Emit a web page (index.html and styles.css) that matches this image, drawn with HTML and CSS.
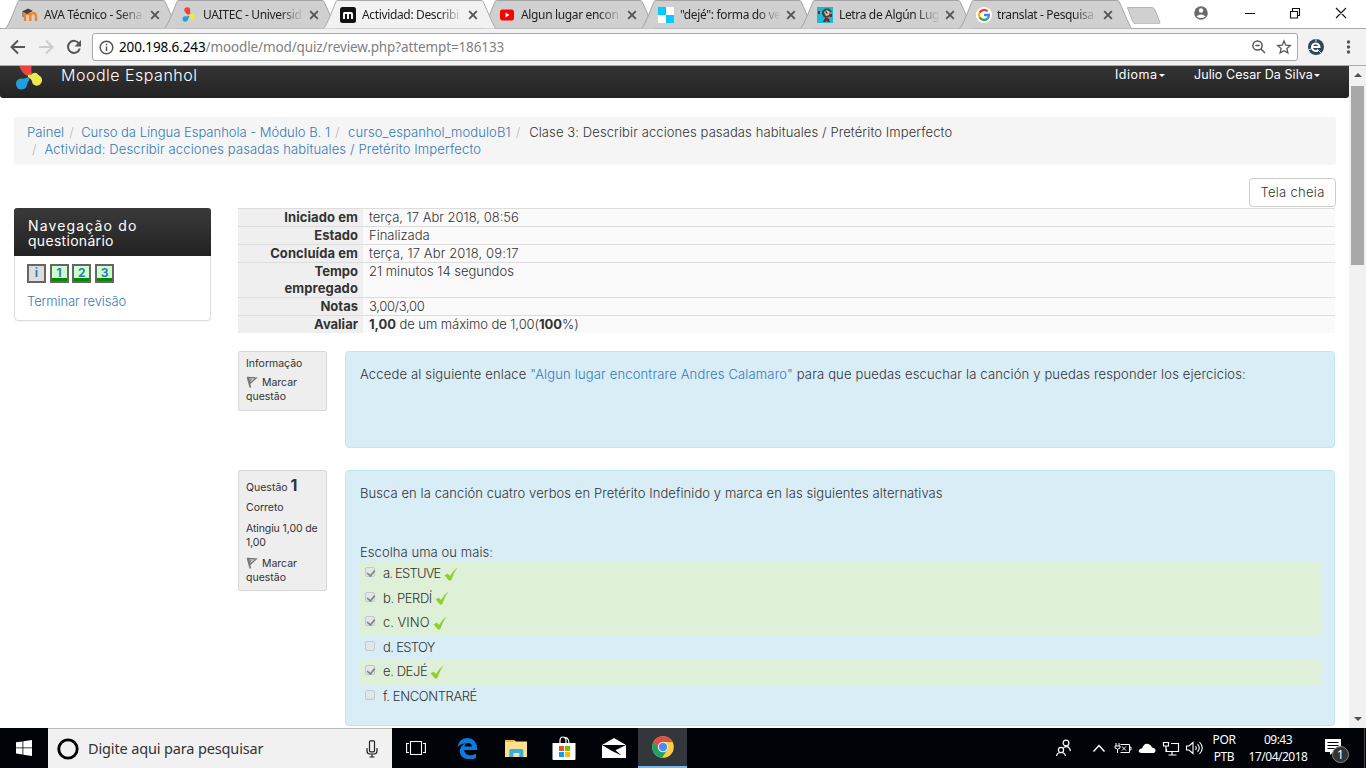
FILE: index.html
```html
<!DOCTYPE html>
<html lang="pt-br">
<head>
<meta charset="utf-8">
<title>Moodle Espanhol</title>
<link rel="stylesheet" href="styles.css">
</head>
<body>
<svg class="defs" width="0" height="0">
  <defs>
    <symbol id="tabshape" viewBox="0 0 173 29"><path d="M.5 28.500 C4 26 12 3 13.500.8Q14.200.5 15 .5H158Q159 .5 160 1.500C162 5 170 25 172.500 28.500"/></symbol>
    <symbol id="x" viewBox="0 0 10 10"><path d="M1.200 1.200l7.600 7.600M8.800 1.200l-7.600 7.600" stroke="#555" stroke-width="1.900"/></symbol>
    <symbol id="blob" viewBox="0 0 28 32">
      <path d="M4.500 6a6 6 0 1 1 12 1Q16 11 17 14L13 16Q9 15 6.500 10.500Q4.500 8.500 4.500 6z" fill="#ee4340"/>
      <path d="M13 14.500Q16 15.500 17.500 13.500Q21 11.500 23.500 15Q27.500 17 27 21Q25.500 26.500 20.500 25.500Q17 24.500 17 21Q16 18 13 17.500z" fill="#ece84d"/>
      <path d="M13.500 17Q9 19.500 6 18.500Q1 19 1 24Q1.500 29.500 6.500 29.500Q11.500 29 12 25Q12 22 14.500 20z" fill="#219fdc"/>
    </symbol>
    <symbol id="tick" viewBox="0 0 14 14"><path d="M.5 8.300L3.800 6.800 6 9Q8.500 4 13.700.2Q9.200 6 7.200 13.300L5.200 13.700z" fill="#8fce2c"/></symbol>
    <symbol id="flag" viewBox="0 0 12 12"><path d="M1.500 1.200l2.900 10.300" stroke="#777" stroke-width="1.700" fill="none"/><path d="M2 1.300L10.300 2 4.200 7.300z" fill="#ddd" stroke="#777" stroke-width="1.300"/><path d="M3 2l3 1-2 3z" fill="#888"/></symbol>
  </defs>
</svg>

<header class="tabs">
  <div class="tab"><svg class="shape"><use href="#tabshape"/></svg>
    <svg class="fav" viewBox="0 0 16 16"><path d="M3 14V7.500Q4 6 6 7Q8 6.500 8.300 8V14M8.300 8Q9.500 5.800 12 6.200Q14 6.500 14 9V14" fill="none" stroke="#f58220" stroke-width="2.400"/><path d="M0 4.500L6 1.500 11 4 5 7z" fill="#444"/><path d="M1 5v5" stroke="#555"/></svg>
    <span class="title">AVA Técnico - Sena</span><svg class="close"><use href="#x"/></svg></div>
  <div class="tab"><svg class="shape"><use href="#tabshape"/></svg>
    <svg class="fav"><use href="#blob"/></svg>
    <span class="title">UAITEC - Universid</span><svg class="close"><use href="#x"/></svg></div>
  <div class="tab active"><svg class="shape"><use href="#tabshape"/></svg>
    <svg class="fav" viewBox="0 0 16 16"><rect width="16" height="16" rx="2.500" fill="#111"/><path d="M4 12V5.500M4 6H7.500Q8 6 8 7V12M8 6H11Q12 6 12 7V12" fill="none" stroke="#fff" stroke-width="1.900"/></svg>
    <span class="title">Actividad: Describi</span><svg class="close"><use href="#x"/></svg></div>
  <div class="tab"><svg class="shape"><use href="#tabshape"/></svg>
    <svg class="fav" viewBox="0 0 16 16"><rect x="1" y="2.500" width="14" height="11" rx="2.500" fill="#f00"/><path d="M6.500 5.500v5l4-2.500z" fill="#fff"/></svg>
    <span class="title">Algun lugar encon</span><svg class="close"><use href="#x"/></svg></div>
  <div class="tab"><svg class="shape"><use href="#tabshape"/></svg>
    <svg class="fav" viewBox="0 0 16 16"><path fill="#fff" d="M0 0h16v16H0z"/><path fill="#0cf" d="M0 0h8v8h8v8H8V8H0z"/></svg>
    <span class="title">"dejé": forma do ve</span><svg class="close"><use href="#x"/></svg></div>
  <div class="tab"><svg class="shape"><use href="#tabshape"/></svg>
    <svg class="fav" viewBox="0 0 16 16"><path fill="#19bcd8" d="M0 0h16v16H0z"/><path d="M5 4l3-2.500 4 0 3 3-2 1 1 3-3 2H7L5 7z" fill="#444"/><path d="M7 5l3-2 3 2-1 3-3 1z" fill="#d9d0b0"/><path d="M8.500 4.500l2 2" stroke="#333" stroke-width="1.300"/><path d="M1 4h2v3H1zM13 7h2v3h-2zM7 12.500l2-2.500 3 2 1 3h-2l-1.500-1L8 15H6z" fill="#a01818"/></svg>
    <span class="title">Letra de Algún Lug</span><svg class="close"><use href="#x"/></svg></div>
  <div class="tab last"><svg class="shape"><use href="#tabshape"/></svg>
    <svg class="fav" viewBox="0 0 16 16"><circle cx="8" cy="8" r="8" fill="#fff"/><g fill="none" stroke-width="2.300"><path d="M11.500 4.300A5 5 0 0 0 3.600 5.700" stroke="#ea4335"/><path d="M3.600 5.700a5 5 0 0 0 0 4.600" stroke="#fbbc05"/><path d="M3.600 10.300a5 5 0 0 0 7.800 1.400" stroke="#34a853"/><path d="M11.400 11.700A5 5 0 0 0 13 8H8" stroke="#4285f4"/></g></svg>
    <span class="title">translat - Pesquisa</span><svg class="close"><use href="#x"/></svg></div>
  <svg class="newtab" width="38" height="24" viewBox="0 0 38 24"><path d="M3.500 7.500H28Q30 7.500 31 10L36 22.500Q36 24 34 24H12Q9.500 24 8.500 21z" fill="#d0d0d0" stroke="#b5b5b5"/></svg>
  <svg class="winctl" width="182" height="28" viewBox="0 0 182 28"><circle cx="17" cy="13" r="6.800" fill="#6b6b6b"/><circle cx="17" cy="10.500" r="2.200" fill="#fff"/><path d="M12.500 16.500q4.500-4 9 0q-4.500 3-9 0" fill="#fff"/><g fill="none" stroke="#111" stroke-width="1.100"><path d="M61 13.500h10M106.500 11.500h7v6.500h-7zM108.500 11V8.500h7v7h-2M152 8l10 10M162 8l-10 10"/></g></svg>
</header>

<div class="toolbar">
  <svg class="nav" width="92" height="37" viewBox="0 0 92 37"><g fill="none" stroke-width="2"><path d="M25 19H12M18 12.500L11.500 19 18 25.500" stroke="#555"/><path d="M39 19h13M46 12.500l6.500 6.500L46 25.500" stroke="#ccc"/><path d="M79 15.500a6 6 0 1 0 .8 5" stroke="#555"/></g><path d="M81 12v6.500h-6.500z" fill="#555"/></svg>
  <div class="omnibox">
    <svg width="15" height="15" viewBox="0 0 15 15" fill="none" stroke="#555" stroke-width="1.500"><circle cx="7.500" cy="7.500" r="6.300"/><path d="M7.500 6.500v4.500M7.500 3.700v1.600"/></svg>
    <span class="url"><b>200.198.6.243</b>/moodle/mod/quiz/review.php?attempt=186133</span>
    <svg class="right" width="42" height="16" viewBox="0 0 42 16" fill="none" stroke="#555" stroke-width="1.500"><circle cx="6.500" cy="6.500" r="4.600"/><path d="M10 10l4 4M4.300 6.500h4.400" /><path d="M33 2l1.800 4.200 4.500.4-3.400 3 1 4.400-3.900-2.300-3.900 2.300 1-4.400-3.400-3 4.500-.4z" stroke-width="1.300"/></svg>
  </div>
  <svg width="68" height="37" viewBox="0 0 68 37"><circle cx="18" cy="19" r="8" fill="#2f4858"/><path d="M13.500 19H21.500A3.800 3.800 0 1 0 20.500 21.800" fill="none" stroke="#fff" stroke-width="2"/><path d="M18 11v3M10 22l3-1M23 25l-2-2" stroke="#fff" stroke-width=".8"/><g fill="#555"><circle cx="50.500" cy="14" r="1.700"/><circle cx="50.500" cy="19" r="1.700"/><circle cx="50.500" cy="24" r="1.700"/></g></svg>
</div>

<div class="viewport">
  <div class="page">
    <nav class="navbar">
      <svg class="logo" width="28" height="32"><use href="#blob"/></svg>
      <span class="brand">Moodle Espanhol</span>
      <span class="menu lang">Idioma<i class="caret"></i></span>
      <span class="menu user">Julio Cesar Da Silva<i class="caret"></i></span>
    </nav>
    <div class="crumbs">
      <div><a class="c1">Painel</a><i>/</i><a class="c2">Curso da Língua Espanhola - Módulo B. 1</a><i>/</i><a class="c3">curso_espanhol_moduloB1</a><i>/</i><span class="c4">Clase 3: Describir acciones pasadas habituales / Pretérito Imperfecto</span></div>
      <div><i class="first">/</i><a class="c5">Actividad: Describir acciones pasadas habituales / Pretérito Imperfecto</a></div>
    </div>
    <div class="actions"><button class="btn">Tela cheia</button></div>
    <div class="columns">
      <aside class="block">
        <h2><span class="wide">Navegação do</span><br>questionário</h2>
        <div class="block-body">
          <div class="qn"><a class="info">i</a><a>1</a><a>2</a><a>3</a></div>
          <a class="finish">Terminar revisão</a>
        </div>
      </aside>
      <main>
        <table class="summary">
          <tr><th class="wider">Iniciado em</th><td>terça, 17 Abr 2018, 08:56</td></tr>
          <tr><th>Estado</th><td>Finalizada</td></tr>
          <tr><th class="wider">Concluída em</th><td class="date">terça, 17 Abr 2018, 09:17</td></tr>
          <tr><th>Tempo<br><span class="t2">empregado</span></th><td>21 minutos 14 segundos</td></tr>
          <tr><th>Notas</th><td class="num">3,00/3,00</td></tr>
          <tr><th>Avaliar</th><td class="grade"><b>1,00</b> de um máximo de 1,00(<b>100</b>%)</td></tr>
        </table>
        <section class="que">
          <div class="qinfo"><p>Informação</p><p><svg width="12" height="12"><use href="#flag"/></svg> Marcar<br>questão</p></div>
          <div class="qbody short"><p class="q0">Accede al siguiente enlace <a>"Algun lugar encontrare Andres Calamaro"</a> para que puedas escuchar la canción y puedas responder los ejercicios:</p></div>
        </section>
        <section class="que second">
          <div class="qinfo graded"><p class="no">Questão <b>1</b></p><p>Correto</p><p class="mark">Atingiu 1,00 de<br>1,00</p><p><svg width="12" height="12"><use href="#flag"/></svg> Marcar<br>questão</p></div>
          <div class="qbody"><p class="q1">Busca en la canción cuatro verbos en Pretérito Indefinido y marca en las siguientes alternativas</p>
            <p class="prompt">Escolha uma ou mais:</p>
            <div class="ans ok"><i class="box on"></i><span class="a1">a. ESTUVE</span><svg class="tick"><use href="#tick"/></svg></div>
            <div class="ans ok"><i class="box on"></i><span class="a2">b. PERDÍ</span><svg class="tick"><use href="#tick"/></svg></div>
            <div class="ans ok"><i class="box on"></i><span class="a3">c. VINO</span><svg class="tick"><use href="#tick"/></svg></div>
            <div class="ans"><i class="box"></i><span class="a4">d. ESTOY</span></div>
            <div class="ans ok"><i class="box on"></i><span class="a5">e. DEJÉ</span><svg class="tick"><use href="#tick"/></svg></div>
            <div class="ans"><i class="box"></i><span class="a6">f. ENCONTRARÉ</span></div>
          </div>
        </section>
      </main>
    </div>
  </div>
  <div class="scrollbar"><i class="up"></i><i class="thumb"></i><i class="down"></i></div>
</div>

<footer class="taskbar">
  <div class="start"><svg width="16" height="16" viewBox="0 0 16 16" fill="#fff"><path d="M0 2.300l6.500-.9v6.100H0zM7.300 1.300L16 0v7.500H7.300zM0 8.300h6.500v6.200L0 13.600zM7.300 8.300H16V16l-8.700-1.300z"/></svg></div>
  <div class="search"><svg width="22" height="22" viewBox="0 0 22 22"><circle cx="11" cy="11" r="9.200" fill="none" stroke="#000" stroke-width="2.800"/></svg><span>Digite aqui para pesquisar</span><svg class="mic" width="12" height="18" viewBox="0 0 12 18" fill="none" stroke="#222" stroke-width="1.200"><rect x="3.500" y=".8" width="5" height="11" rx="1"/><path d="M1 8v3q0 3 3 3h4q3 0 3-3V8M6 14v3M3.500 17h5"/></svg></div>
  <div class="app view"><svg width="20" height="16" viewBox="0 0 20 16" fill="none" stroke="#fff" stroke-width="1.100"><path d="M4.500 1.500h11v13h-11zM3 3.500H.6v9H3M17 3.500h2.400v9H17"/></svg></div>
  <div class="app edge"><svg width="21" height="21" viewBox="0 0 21 21"><path d="M.3 9.300Q2 0 11 0Q20.500 1 20.300 12H7.300Q7.500 17 13 17.200Q16 17.200 19 15.700V20Q16 21.500 12 21.200Q4 21 2.800 14Q2.600 8 8.500 5.300Q3.500 5.700.3 9.300zM7.500 8.500H14.800Q14.700 4.800 11 5Q7.800 5.200 7.500 8.500z" fill="#0c7bdc" fill-rule="evenodd"/></svg></div>
  <div class="app files"><svg width="22" height="19" viewBox="0 0 22 19"><path d="M0 1h9l2 1.500h11V18H0z" fill="#ffe08a"/><path d="M0 1h9v2H0z" fill="#f4b73a"/><path d="M4.300 18v-6.500q0-1.500 1.500-1.500h11q1.500 0 1.500 1.500V18h-4v-4h-6v4z" fill="#34aee3"/></svg></div>
  <div class="app"><svg width="24" height="24" viewBox="0 0 24 24"><path d="M.5 7h23v16q0 1-1 1h-21q-1 0-1-1z" fill="#fff"/><path d="M8 7V4.500Q8 1 11 1T14 4.500V7M12 2Q16.500.5 17 7" fill="none" stroke="#fff" stroke-width="1.200"/><path fill="#f25022" d="M7 10h5v5H7z"/><path fill="#7fba00" d="M13 10h5v5h-5z"/><path fill="#00a4ef" d="M7 16h5v5H7z"/><path fill="#ffb900" d="M13 16h5v5h-5z"/></svg></div>
  <div class="app mail"><svg width="24" height="20" viewBox="0 0 24 20"><path d="M0 7L12 0l12 7v13H0z" fill="#fff"/><path d="M0 7h24l-10.500 5.200 6 5.300-9.500-4.500z" fill="#000308"/></svg></div>
  <div class="app current"><svg width="22" height="22" viewBox="0 0 22 22"><circle cx="11" cy="11" r="10.800" fill="#ffcd40"/><path d="M11 11L1.600 5.600A10.800 10.800 0 0 0 10 21.800L15.500 13.500z" fill="#1da462"/><path d="M1.600 5.600A10.800 10.800 0 0 1 20.600 6H11L6.500 13.500z" fill="#dd5144"/><circle cx="11" cy="11" r="5.200" fill="#f1f1f1"/><circle cx="11" cy="11" r="4.200" fill="#4c8bf5"/></svg></div>
  <div class="tray">
    <svg width="150" height="40" viewBox="0 0 150 40" fill="none" stroke="#fff" stroke-width="1.200"><circle cx="6" cy="22" r="2.600"/><path d="M1.500 28q.5-3.500 4.500-3.500t4.500 3.500"/><circle cx="11" cy="15" r="2.900"/><path d="M8.500 19.500q5.500-3 7 3.500"/><path d="M38.500 23.500L44 17.500l5.500 6" stroke-width="1.500"/><path d="M65.500 16.500h9v8h-9M74.500 19h1.500v3h-1.500M67 18.500l4 4M71 18.500l-4 4M61 15v3M64 15v3M60 18h5v2q-2.500 2.500-5 0zM62.500 21v4" stroke-width="1"/><path d="M86 25q-3-.7-2-3 1-2 3-1.500Q89 14.500 93.500 16q3 1 3.500 3.500 4 .5 3.500 3.500-.5 2-2 2z" fill="#fff" stroke="none"/><path d="M108.500 14.500h5v3.500h-5zM116 15.500h7.500v8h-12V21M117 24v3M113.500 27h8M111 18v6" /><path d="M131.500 18h2.500l4-3.500v11l-4-3.500h-2.500zM140.500 18q1.500 2 0 4M142.500 16q3.500 4 0 8M144.500 14q5.500 6 0 12" stroke-width="1.100"/></svg>
    <div class="lang2">POR<br>PTB</div><div class="clock">09:43<br>17/04/2018</div>
    <div class="notif"><svg width="18" height="17" viewBox="0 0 18 17"><path d="M0 0h16v13h-8l-3 3v-3H0z" fill="#fff"/><path d="M2.500 3.500h11M2.500 6.500h11M2.500 9.500h7" stroke="#000"/></svg><span>1</span></div>
  </div>
</footer>
</body>
</html>
```
FILE: styles.css
```css
* { box-sizing: border-box; }
body { margin: 0; width: 1366px; height: 768px; overflow: hidden; background: #fff; font: 300 13px/17px Inter, "Liberation Sans", sans-serif; color: #333; display: flex; flex-direction: column; white-space: nowrap; }
p, h2 { margin: 0; }
a { color: #337ab7; text-decoration: none; }
i { font-style: normal; }
.defs { position: absolute; }

.tabs { height: 28px; flex: none; display: flex; position: relative; padding-left: 5px; font: 400 12px/16px "Noto Sans", "Open Sans", sans-serif; color: #222; letter-spacing: -.35px; }
.tab { position: relative; width: 173px; height: 28px; margin-right: -14px; flex: none; display: flex; align-items: center; padding: 1px 0 0 17px; }
.shape { position: absolute; left: 0; top: 0; width: 173px; height: 29px; fill: #d0d0d0; stroke: #a3a3a3; }
.active { z-index: 2; }
.active .shape { fill: #f2f2f2; stroke: #aaa; }
.tab > :not(.shape) { position: relative; }
.fav { width: 16px; height: 16px; flex: none; margin-right: 6px; }
.title { width: 104px; -webkit-mask-image: linear-gradient(90deg, #000 74%, transparent 97%); mask-image: linear-gradient(90deg, #000 74%, transparent 97%); }
.close { width: 10px; height: 10px; flex: none; margin-left: 2px; }
.last .fav { margin-right: 5px; }
.newtab { margin-left: 6px; flex: none; }
.winctl { margin-left: auto; flex: none; }

.toolbar { height: 38px; flex: none; display: flex; background: #f2f2f2; border-top: 1px solid #aaa; border-bottom: 1px solid #aaa; }
.toolbar > svg { margin-top: -1px; flex: none; }
.omnibox { flex: 1; height: 28px; margin-top: 4px; border: 1px solid #a8a8a8; border-radius: 3px; background: #fff; display: flex; align-items: center; padding: 0 4px 0 6px; font: 400 13.500px/18px "Noto Sans", "Open Sans", sans-serif; color: #808080; }
.url { margin-left: 5px; letter-spacing: -.12px; }
.url b { font-weight: 400; color: #000; }
.right { margin-left: auto; }

.viewport { height: 662px; flex: none; display: flex; overflow: hidden; }
.page { width: 1349px; height: 662px; }
.navbar { height: 32px; background: linear-gradient(#353535, #222); color: #fff; display: flex; padding-left: 15px; border-radius: 0 0 3px 3px; font-weight: 400; overflow: hidden; }
.logo { margin-top: -6px; flex: none; }
.brand { margin-left: 18px; font: 300 16px/18px Inter, sans-serif; letter-spacing: .5px; }
.menu { font-size: 12.500px; }
.lang { margin-left: auto; width: 79px; letter-spacing: .5px; }
.user { width: 155px; letter-spacing: .07px; }
.caret { display: inline-block; border: 3.500px solid transparent; border-top-color: #fff; border-bottom: 0; margin-left: 1px; vertical-align: 2px; }
.crumbs { margin: 19px 13px 0 14px; height: 48px; padding: 7px 13px; background: #f5f5f5; border-radius: 3px; }
.crumbs div { display: flex; }
.crumbs i { width: 17px; padding-left: 5px; color: #bbb; }
.crumbs .first { width: 17.500px; }
.c1 { letter-spacing: .1px; }
.c3 { letter-spacing: .1px; margin-left: 1px; }
.c4 { letter-spacing: .1px; margin-left: 1.500px; }
.c5 { letter-spacing: .14px; }
.actions { display: flex; justify-content: flex-end; margin: 13px 13px 1px 0; }
.btn { width: 87px; height: 29px; padding: 0; background: #fff; border: 1px solid #ccc; border-radius: 4px; font: inherit; color: #333; letter-spacing: .3px; }
.columns { display: flex; align-items: flex-start; padding-left: 14px; }
.block { width: 197px; height: 113px; border: 1px solid #ddd; border-radius: 4px; box-shadow: 0 1px 1px rgba(0,0,0,.05); margin-right: 27px; }
.block h2 { margin: -1px -1px 0; height: 48px; padding: 10px 14px; background: linear-gradient(#3a3a3a, #222); color: #fff; font: 400 14px/15px Inter, sans-serif; letter-spacing: .3px; border-radius: 3px 3px 0 0; }
.block .wide { letter-spacing: 1.150px; }
.block-body { padding: 8px 12px; }
.qn { display: flex; gap: 3.700px; margin-bottom: 10px; }
.qn a { width: 19px; height: 19px; border: 2px solid #666; background: #cfc; box-shadow: inset 0 -3px #008a00; text-align: center; font-size: 12px; font-weight: 700; line-height: 14px; }
.qn .info { background: #ddd; box-shadow: none; }
.finish { letter-spacing: -.1px; }
main { width: 1097px; flex: none; }
.summary { width: 100%; border-collapse: separate; border-spacing: 0; }
.summary th, .summary td { padding: 0; border-top: 1px solid #ddd; vertical-align: top; }
.summary th { width: 125px; padding-right: 5px; background: #efefef; text-align: right; font-weight: 700; }
.summary .wider { letter-spacing: .08px; }
.summary td { background: #fafafa; padding-left: 6px; }
.summary b { font-weight: 700; }
.summary .date, .t2 { letter-spacing: .12px; }
.summary .num { letter-spacing: -.35px; }
.summary .grade { letter-spacing: -.06px; }
.que { width: 1097px; display: flex; align-items: flex-start; margin-top: 18px; }
.que.second { margin-top: 22px; }
.qinfo { width: 89px; flex: none; margin-right: 18px; padding: 5px 7px 6px; border: 1px solid #d8d8d8; border-radius: 2px; background: #eee; font-size: 10.500px; line-height: 14px; font-weight: 400; }
.qinfo p { margin-bottom: 5px; }
.qinfo p:last-child { margin: 0; }
.qinfo svg { vertical-align: -2px; margin-right: 1px; }
.graded { height: 121px; }
.qinfo .no { line-height: 20px; margin: 0 0 3px; }
.no b { font-size: 16px; line-height: 18px; font-weight: 700; }
.qinfo .mark { margin: 7px 0; letter-spacing: -.1px; }
.qbody { flex: 1; min-width: 0; height: 256px; padding: 14px 12px 14px 14px; border: 1px solid #bce8f1; border-radius: 4px; background: #d9edf7; }
.qbody.short { height: 97px; }
.q0 { letter-spacing: .165px; }
.q1 { letter-spacing: .08px; }
.prompt { margin: 42px 0 1px; letter-spacing: .07px; }
.ans { height: 24.500px; width: 962px; display: flex; align-items: center; padding: 0 0 1px 5px; }
.ok { background: #dff0d8; }
.a1 { letter-spacing: -.8px; }
.a2 { letter-spacing: -.4px; }
.a4 { letter-spacing: -.65px; }
.a5 { letter-spacing: -.4px; }
.a6 { letter-spacing: -.4px; }
.box { width: 10px; height: 10px; flex: none; margin: -3px 8px 0 0; border: 1px solid #c2c9cc; border-radius: 2px; background: #e0e7ea; }
.box.on::after { content: ""; display: block; width: 4px; height: 7px; margin: 0 0 0 2px; border: solid #808680; border-width: 0 2px 2px 0; transform: rotate(40deg) scale(.85); }
.tick { width: 14px; height: 14px; margin-left: 3px; }

.scrollbar { width: 17px; background: #f1f1f1; display: flex; flex-direction: column; align-items: center; }
.up { border: 4px solid transparent; border-top: 0; border-bottom: 4px solid #505050; margin-top: 7px; }
.thumb { width: 13px; height: 179px; background: #a8a8a8; margin-top: 9px; }
.down { border: 4px solid transparent; border-bottom: 0; border-top: 4px solid #505050; margin: auto 0 7px; }

.taskbar { height: 40px; flex: none; display: flex; background: #000308; font-family: "Noto Sans", "Open Sans", sans-serif; font-weight: 400; }
.start, .app { width: 48px; display: flex; align-items: center; justify-content: center; }
.search { width: 344px; background: #f1f1f1; border-top: 1px solid #bbb; display: flex; align-items: center; padding: 0 14px 0 9px; font-size: 14.500px; color: #333; }
.search span { margin-left: 9px; letter-spacing: -.14px; }
.mic { margin-left: auto; }
.app { width: 49.200px; }
.view { padding-right: 2px; }
.edge { padding-left: 3px; }
.files, .mail { padding-left: 2px; }
.current { background: #33363a; border-bottom: 2px solid #76b9ed; }
.tray { margin-left: auto; width: 311px; display: flex; color: #fff; font-size: 12px; line-height: 17px; text-align: center; }
.tray > svg { flex: none; }
.lang2 { width: 38px; padding-top: 3px; letter-spacing: -.4px; }
.clock { width: 70px; padding-top: 3px; letter-spacing: -.5px; }
.notif { position: relative; padding: 11px 0 0 12px; width: 52px; text-align: left; border-right: 1px solid #444; }
.notif span { position: absolute; left: 19px; top: 18px; width: 17px; height: 17px; border: 1px solid #888; border-radius: 50%; background: #333; text-align: center; line-height: 15px; }
```
